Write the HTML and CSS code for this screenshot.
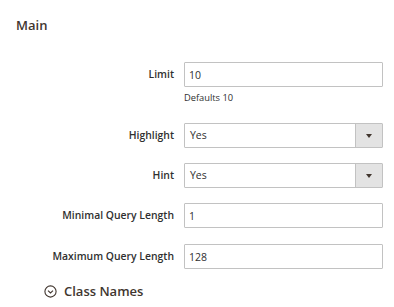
FILE: index.html
```html
<!DOCTYPE html>
<html>
<head>
<meta charset="utf-8">
<link rel="stylesheet" href="styles.css">
</head>
<body>
<div class="page">
  <h2 class="section-title">Main</h2>
  <div class="form">
    <div class="row">
      <label class="label">Limit</label>
      <div class="control">
        <input class="input" type="text" value="10">
        <div class="note">Defaults 10</div>
      </div>
    </div>
    <div class="row">
      <label class="label">Highlight</label>
      <div class="control">
        <div class="select"><span class="select-value">Yes</span><span class="select-btn"><span class="arrow"></span></span></div>
      </div>
    </div>
    <div class="row">
      <label class="label">Hint</label>
      <div class="control">
        <div class="select"><span class="select-value">Yes</span><span class="select-btn"><span class="arrow"></span></span></div>
      </div>
    </div>
    <div class="row">
      <label class="label">Minimal Query Length</label>
      <div class="control">
        <input class="input" type="text" value="1">
      </div>
    </div>
    <div class="row row-last">
      <label class="label">Maximum Query Length</label>
      <div class="control">
        <input class="input" type="text" value="128">
      </div>
    </div>
  </div>
  <div class="collapsible">
    <svg class="chev" width="13" height="13" viewBox="0 0 13 13"><circle cx="6.5" cy="6.5" r="5.6" fill="none" stroke="#41362f" stroke-width="1.1"/><path d="M4 5.6 L6.5 8 L9 5.6" fill="none" stroke="#41362f" stroke-width="1.1"/></svg>
    <span class="collapsible-title">Class Names</span>
  </div>
</div>
</body>
</html>
```
FILE: styles.css
```css
html, body {
  margin: 0;
  padding: 0;
  background: #fff;
}
body {
  font-family: "Open Sans", "Liberation Sans", sans-serif;
  color: #303030;
}
.page {
  padding: 17px 11px 0 16px;
}
.section-title {
  margin: 0;
  font-size: 13px;
  font-weight: 600;
  color: #41362f;
  line-height: 16px;
}
.form {
  margin-top: 29px;
  display: flex;
  flex-direction: column;
  gap: 15px;
}
.row-last {
  margin-top: 1px;
}
.row {
  display: grid;
  grid-template-columns: 1fr 199px;
  column-gap: 10px;
  align-items: start;
}
.label {
  text-align: right;
  font-size: 10.4px;
  font-weight: 600;
  color: #303030;
  line-height: 25px;
}
.control {
  display: flex;
  flex-direction: column;
}
.input {
  box-sizing: border-box;
  width: 199px;
  height: 25px;
  margin: 0;
  border: 1px solid #c2c2c2;
  border-radius: 1px;
  padding: 0 4px;
  font-family: "Open Sans", "Liberation Sans", sans-serif;
  font-size: 10.5px;
  color: #303030;
  outline: none;
}
.note {
  font-size: 9.3px;
  color: #303030;
  margin-top: 4px;
  margin-bottom: 4px;
  line-height: 13px;
}
.select {
  box-sizing: border-box;
  width: 199px;
  height: 25px;
  border: 1px solid #c2c2c2;
  border-radius: 1px;
  display: flex;
  align-items: stretch;
}
.select-value {
  flex: 1;
  padding: 0 5px;
  font-size: 10.5px;
  line-height: 23px;
}
.select-btn {
  width: 26px;
  background: #e3e3e3;
  border-left: 1px solid #c2c2c2;
  display: flex;
  align-items: center;
  justify-content: center;
}
.arrow {
  width: 0;
  height: 0;
  border-left: 3px solid transparent;
  border-right: 3px solid transparent;
  border-top: 4px solid #41362f;
}
.collapsible {
  margin-top: 13px;
  margin-left: 28px;
  display: flex;
  align-items: center;
  gap: 7px;
}
.chev {
  display: block;
}
.collapsible-title {
  font-size: 13px;
  font-weight: 600;
  color: #41362f;
  line-height: 18px;
}
```
